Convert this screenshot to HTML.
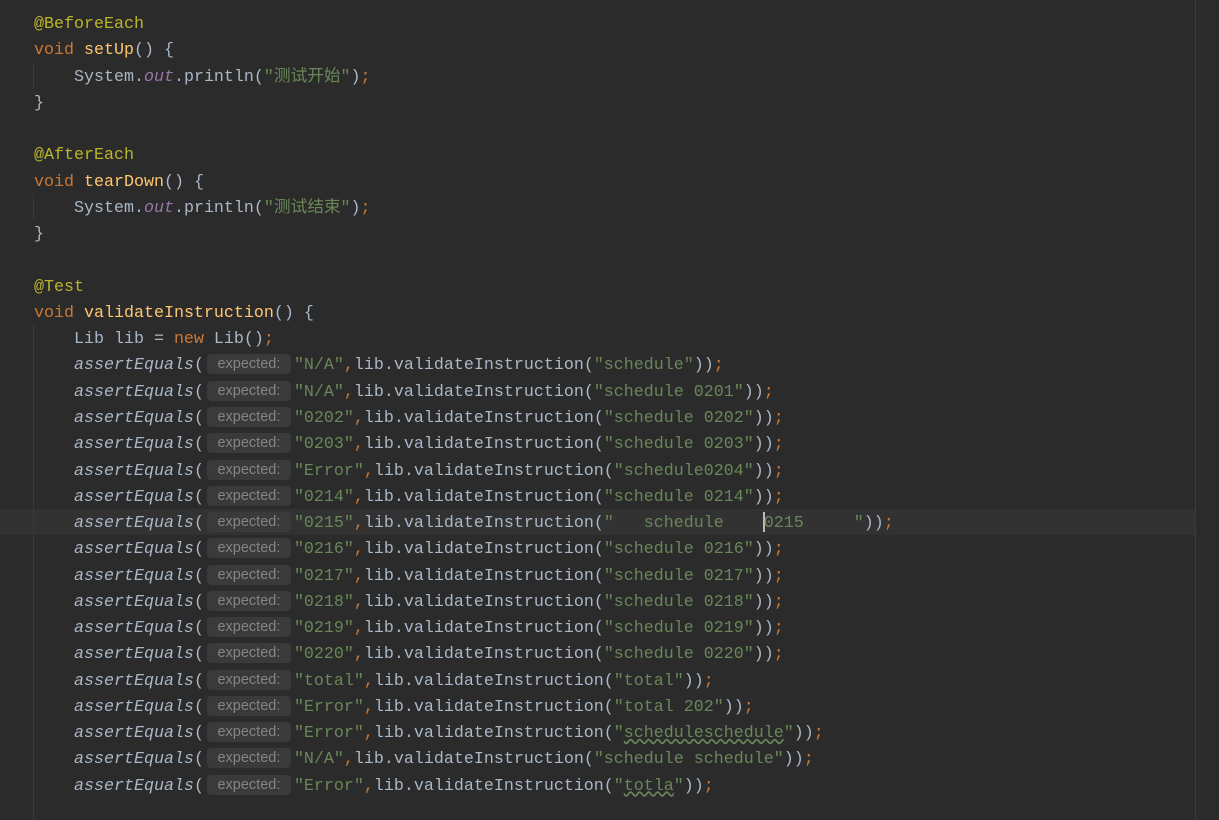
<!DOCTYPE html>
<html><head><meta charset="utf-8"><style>
html,body{margin:0;padding:0;background:#2b2b2b;width:1219px;height:820px;overflow:hidden}
.code{position:absolute;left:34px;top:12px;font-family:"Liberation Mono","Noto Sans CJK SC",monospace;font-size:16.67px;color:#a9b7c6}
.l{height:26.28px;line-height:26.28px;white-space:pre}
.an{color:#bbb529}.kw{color:#cc7832}.fn{color:#ffc66d}.st{color:#6a8759}.fd{color:#9876aa;font-style:italic}.it{font-style:italic}.p{color:#cc7832}
.h{display:inline-block;width:84px;margin:0 3px;height:20px;line-height:20px;background:#3a3a3a;border-radius:4px;color:#858585;font-family:"Liberation Sans",sans-serif;font-size:14.5px;text-align:center;vertical-align:1px;font-style:normal}
.cur{position:absolute;left:0;top:509px;width:1195px;height:26px;background:#323232}
.rm{position:absolute;left:1195px;top:0;width:1px;height:820px;background:#3c3c3c}
.ig{position:absolute;left:33px;width:1px;background:#393939}
.caret{position:absolute;left:763px;top:512px;width:2px;height:20px;background:#bbbbbb}
.u{text-decoration:underline wavy #6a8759}
</style></head><body>
<div class="cur"></div><div class="rm"></div>
<div class="ig" style="top:63px;height:26px"></div>
<div class="ig" style="top:194px;height:26px"></div>
<div class="ig" style="top:325px;height:495px"></div>
<div class="caret"></div>
<div class="code">
<div class="l"><span class="an">@BeforeEach</span></div>
<div class="l"><span class="kw">void </span><span class="fn">setUp</span>() {</div>
<div class="l">    System.<span class="fd">out</span>.println(<span class="st">"测试开始"</span>)<span class="p">;</span></div>
<div class="l">}</div>
<div class="l"> </div>
<div class="l"><span class="an">@AfterEach</span></div>
<div class="l"><span class="kw">void </span><span class="fn">tearDown</span>() {</div>
<div class="l">    System.<span class="fd">out</span>.println(<span class="st">"测试结束"</span>)<span class="p">;</span></div>
<div class="l">}</div>
<div class="l"> </div>
<div class="l"><span class="an">@Test</span></div>
<div class="l"><span class="kw">void </span><span class="fn">validateInstruction</span>() {</div>
<div class="l">    Lib lib = <span class="kw">new </span>Lib()<span class="p">;</span></div>
<div class="l">    <span class="it">assertEquals</span>(<span class="h">expected:</span><span class="st">"N/A"</span><span class="p">,</span>lib.validateInstruction(<span class="st">"schedule"</span>))<span class="p">;</span></div>
<div class="l">    <span class="it">assertEquals</span>(<span class="h">expected:</span><span class="st">"N/A"</span><span class="p">,</span>lib.validateInstruction(<span class="st">"schedule 0201"</span>))<span class="p">;</span></div>
<div class="l">    <span class="it">assertEquals</span>(<span class="h">expected:</span><span class="st">"0202"</span><span class="p">,</span>lib.validateInstruction(<span class="st">"schedule 0202"</span>))<span class="p">;</span></div>
<div class="l">    <span class="it">assertEquals</span>(<span class="h">expected:</span><span class="st">"0203"</span><span class="p">,</span>lib.validateInstruction(<span class="st">"schedule 0203"</span>))<span class="p">;</span></div>
<div class="l">    <span class="it">assertEquals</span>(<span class="h">expected:</span><span class="st">"Error"</span><span class="p">,</span>lib.validateInstruction(<span class="st">"schedule0204"</span>))<span class="p">;</span></div>
<div class="l">    <span class="it">assertEquals</span>(<span class="h">expected:</span><span class="st">"0214"</span><span class="p">,</span>lib.validateInstruction(<span class="st">"schedule 0214"</span>))<span class="p">;</span></div>
<div class="l">    <span class="it">assertEquals</span>(<span class="h">expected:</span><span class="st">"0215"</span><span class="p">,</span>lib.validateInstruction(<span class="st">"   schedule    0215     "</span>))<span class="p">;</span></div>
<div class="l">    <span class="it">assertEquals</span>(<span class="h">expected:</span><span class="st">"0216"</span><span class="p">,</span>lib.validateInstruction(<span class="st">"schedule 0216"</span>))<span class="p">;</span></div>
<div class="l">    <span class="it">assertEquals</span>(<span class="h">expected:</span><span class="st">"0217"</span><span class="p">,</span>lib.validateInstruction(<span class="st">"schedule 0217"</span>))<span class="p">;</span></div>
<div class="l">    <span class="it">assertEquals</span>(<span class="h">expected:</span><span class="st">"0218"</span><span class="p">,</span>lib.validateInstruction(<span class="st">"schedule 0218"</span>))<span class="p">;</span></div>
<div class="l">    <span class="it">assertEquals</span>(<span class="h">expected:</span><span class="st">"0219"</span><span class="p">,</span>lib.validateInstruction(<span class="st">"schedule 0219"</span>))<span class="p">;</span></div>
<div class="l">    <span class="it">assertEquals</span>(<span class="h">expected:</span><span class="st">"0220"</span><span class="p">,</span>lib.validateInstruction(<span class="st">"schedule 0220"</span>))<span class="p">;</span></div>
<div class="l">    <span class="it">assertEquals</span>(<span class="h">expected:</span><span class="st">"total"</span><span class="p">,</span>lib.validateInstruction(<span class="st">"total"</span>))<span class="p">;</span></div>
<div class="l">    <span class="it">assertEquals</span>(<span class="h">expected:</span><span class="st">"Error"</span><span class="p">,</span>lib.validateInstruction(<span class="st">"total 202"</span>))<span class="p">;</span></div>
<div class="l">    <span class="it">assertEquals</span>(<span class="h">expected:</span><span class="st">"Error"</span><span class="p">,</span>lib.validateInstruction(<span class="st">"<span class="u">scheduleschedule</span>"</span>))<span class="p">;</span></div>
<div class="l">    <span class="it">assertEquals</span>(<span class="h">expected:</span><span class="st">"N/A"</span><span class="p">,</span>lib.validateInstruction(<span class="st">"schedule schedule"</span>))<span class="p">;</span></div>
<div class="l">    <span class="it">assertEquals</span>(<span class="h">expected:</span><span class="st">"Error"</span><span class="p">,</span>lib.validateInstruction(<span class="st">"<span class="u">totla</span>"</span>))<span class="p">;</span></div>
</div>
</body></html>
